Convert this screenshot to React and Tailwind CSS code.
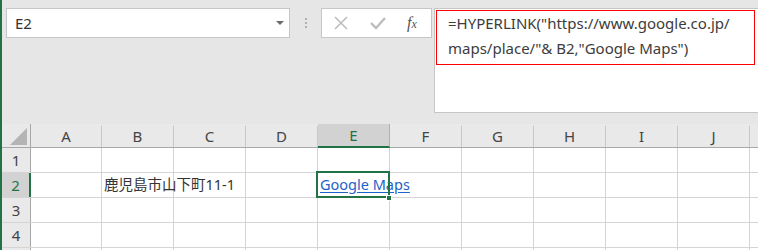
import React from "react";

const cols = ["A", "B", "C", "D", "E", "F", "G", "H", "I", "J"];
const colW = (c) => (c === "A" ? "w-[71px]" : "w-[72px]");

function HeaderRow() {
  return (
    <div className="flex h-[24px] bg-[#e9e9e9] border-b border-[#a8a8a8]">
      <div className="relative w-[29px] shrink-0 border-r border-[#a8a8a8]">
        <svg width="18" height="18" className="absolute left-[8px] top-[4px]">
          <polygon points="17,0 17,17 0,17" fill="#b4b4b4" />
        </svg>
      </div>
      {cols.map((c) => (
        <div
          key={c}
          className={
            colW(c) +
            " shrink-0 flex items-center justify-center text-[15px] " +
            (c === "E"
              ? "bg-[#d2d2d2] text-[#217346] border-b-2 border-[#217346] -mb-px border-r border-r-[#b0b0b0]"
              : "text-[#444] border-r border-[#c8c8c8] mt-[2px]")
          }
        >
          {c}
        </div>
      ))}
      <div className="flex-1" />
    </div>
  );
}

function Row({ n, label = true, children }) {
  const sel = n === 2;
  return (
    <div className="flex h-[25px] border-b border-[#d4d4d4] bg-white">
      <div
        className={
          "w-[29px] shrink-0 flex items-center justify-center text-[15px] " +
          (sel
            ? "bg-[#d2d2d2] text-[#217346] border-r-2 border-[#217346]"
            : "bg-[#e9e9e9] text-[#444] border-r border-[#a8a8a8]")
        }
      >
        {label ? n : null}
      </div>
      {cols.map((c) => (
        <div
          key={c}
          className={"relative " + colW(c) + " shrink-0 border-r border-[#d4d4d4]"}
        >
          {children && children[c]}
        </div>
      ))}
      <div className="flex-1" />
    </div>
  );
}

export default function App() {
  return (
    <div
      className="w-[758px] h-[250px] overflow-hidden bg-[#e6e6e6] border-l-2 border-[#217346] relative"
      style={{ fontFamily: '"Noto Sans", "Noto Sans CJK JP", sans-serif' }}
    >
      {/* top toolbar */}
      <div className="flex h-[124px] pt-[8px] pl-[4px]">
        <div className="relative w-[284px] h-[30px] bg-white border border-[#c6c6c6] flex items-center pl-[8px] text-[15px] text-[#333]">
          E2
          <svg width="8" height="5" className="absolute right-[5px] top-[12px]">
            <polygon points="0,0 8,0 4,4" fill="#6b6b6b" />
          </svg>
        </div>
        <div className="w-[31px] h-[30px] flex flex-col items-center justify-center gap-[2px]">
          <div className="w-[2px] h-[2px] bg-[#b0b0b0]" />
          <div className="w-[2px] h-[2px] bg-[#b0b0b0]" />
          <div className="w-[2px] h-[2px] bg-[#b0b0b0]" />
        </div>
        <div className="w-[111px] h-[30px] bg-white border border-[#c6c6c6] flex items-center">
          <svg width="14" height="14" className="ml-[12px]">
            <path d="M1 1 L13 13 M13 1 L1 13" stroke="#bdbdbd" strokeWidth="1.6" />
          </svg>
          <svg width="16" height="14" className="ml-[22px]">
            <path d="M1 7 L6 12 L15 2" stroke="#bdbdbd" strokeWidth="2.4" fill="none" />
          </svg>
          <span
            className="ml-[21px] text-[16px] italic text-[#555]"
            style={{ fontFamily: '"Liberation Serif", serif' }}
          >
            f<span className="text-[12px]">x</span>
          </span>
        </div>
        <div className="ml-[2px] flex-1 h-[105px] bg-white border-l border-t border-b border-[#c6c6c6] pt-[1px] pl-px">
          <div className="w-[319px] h-[55px] border border-[#ff0000] pl-[11px] text-[15px] leading-[25px] text-[#3c3c3c]">
            <div>=HYPERLINK("https://www.google.co.jp/</div>
            <div>maps/place/"&amp; B2,"Google Maps")</div>
          </div>
        </div>
      </div>

      {/* grid */}
      <HeaderRow />
      <Row n={1} />
      <Row
        n={2}
        children={{
          B: (
            <span className="absolute left-[2px] top-[1px] whitespace-nowrap text-[14.5px] text-[#333]">
              鹿児島市山下町11-1
            </span>
          ),
          E: (
            <>
              <span className="absolute left-[2px] top-[1px] whitespace-nowrap text-[14.5px] text-[#1e63c8] underline underline-offset-[2px] z-0">
                Google Maps
              </span>
              <div className="absolute -left-[2px] -top-[2px] w-[74px] h-[27px] border-2 border-[#217346] z-10" />
              <div className="absolute left-[68px] top-[22px] w-[6px] h-[6px] bg-[#217346] border border-white z-20" />
            </>
          ),
        }}
      />
      <Row n={3} />
      <Row n={4} />
      <Row n={5} label={false} />
    </div>
  );
}
